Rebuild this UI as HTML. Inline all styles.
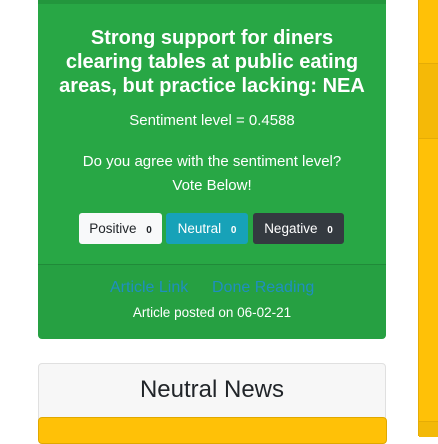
<!DOCTYPE html><html><head><style>
body{margin:0;width:438px;height:436px;overflow:hidden;background:#fff;font-family:"Liberation Sans",sans-serif;position:relative}
.a{position:absolute}
.c{text-align:center;color:#fff;left:38px;width:348px}
</style></head><body>
<div class="a" style="left:38px;top:-5px;width:348px;height:343px;background:#28a745;border-radius:4px"></div>
<div class="a" style="left:38px;top:0;width:348px;height:4px;background:#23963d"></div>
<div class="a" style="left:38px;top:264px;width:348px;height:74px;background:#26a042;border-top:1px solid #208a39;border-radius:0 0 4px 4px"></div>
<div class="a c" style="top:26px;font-size:20px;font-weight:bold;line-height:24px">Strong support for diners<br>clearing tables at public eating<br>areas, but practice lacking: NEA</div>
<div class="a c" style="top:112px;font-size:15px">Sentiment level = 0.4588</div>
<div class="a c" style="top:150px;font-size:15px;line-height:24px">Do you agree with the sentiment level?<br>Vote Below!</div>
<div class="a" style="left:79px;top:213px;width:83px;height:31px;background:#f8f9fa;border-radius:3px;font-size:13.5px;line-height:31px;color:#212529;text-align:center">Positive <b style="font-size:10px;margin-left:6px">0</b></div>
<div class="a" style="left:166px;top:213px;width:82px;height:31px;background:#17a2b8;border-radius:3px;font-size:13.5px;line-height:31px;color:#fff;text-align:center">Neutral <b style="font-size:10px;margin-left:6px">0</b></div>
<div class="a" style="left:253px;top:213px;width:91px;height:31px;background:#343a40;border-radius:3px;font-size:13.5px;line-height:31px;color:#fff;text-align:center">Negative <b style="font-size:10px;margin-left:6px">0</b></div>
<div class="a" style="left:110px;top:279px;font-size:16px;color:#1f8fc0">Article Link</div>
<div class="a" style="left:212px;top:279px;font-size:16px;color:#1f8fc0">Done Reading</div>
<div class="a c" style="top:305px;font-size:13.5px">Article posted on 06-02-21</div>
<div class="a" style="left:38px;top:363px;width:346px;height:60px;background:#f7f7f7;border:1px solid #e0e0e0;border-radius:4px"></div>
<div class="a" style="left:38px;top:376px;width:348px;text-align:center;font-size:24px;color:#212529">Neutral News</div>
<div class="a" style="left:38px;top:417px;width:347px;height:25px;background:#ffc107;border:1px solid #e0a800;border-radius:4px"></div>
<div class="a" style="left:418px;top:0;width:20px;height:436px;background:#ffc107;border-left:1px solid #e5ac06"></div>
<div class="a" style="left:419px;top:63px;width:19px;height:74px;background:#f5b907;border-top:1px solid #e5ac06;border-bottom:1px solid #e5ac06"></div>
<div class="a" style="left:419px;top:421px;width:19px;height:15px;background:#f3b908;border-top:1px solid #e5ac06"></div>
</body></html>
